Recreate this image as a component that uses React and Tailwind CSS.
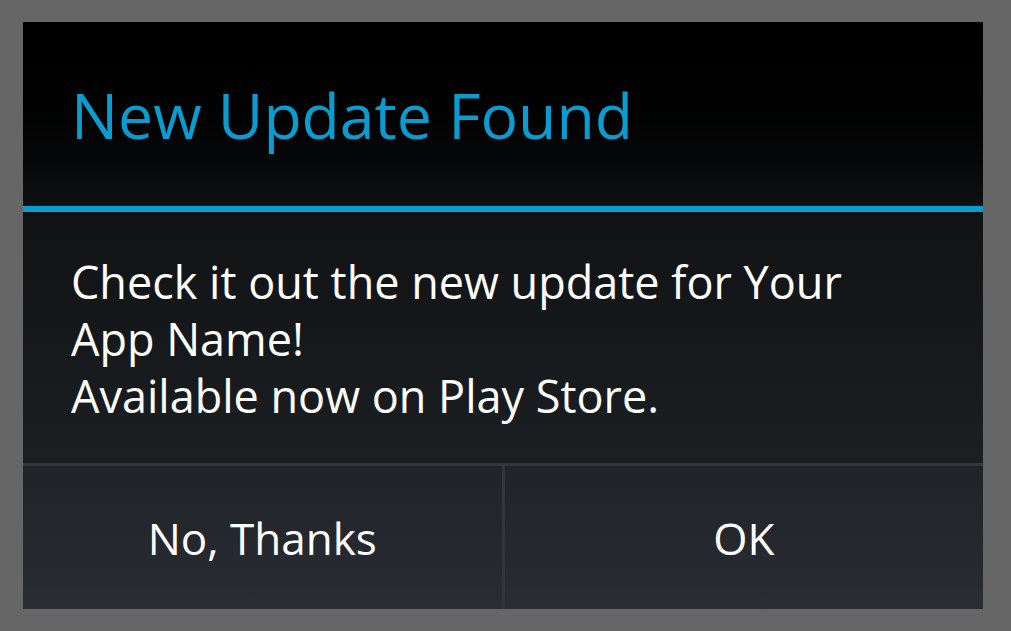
export default function App() {
  return (
    <div className="min-h-screen w-full bg-[#666666] px-[23px] pt-[22px] pb-[22px]" style={{ fontFamily: "'Open Sans', sans-serif" }}>
      <div className="flex h-[587px] w-[960px] flex-col">
        {/* Title */}
        <div className="flex h-[184px] items-center bg-gradient-to-b from-[#000000] to-[#0e1012] pl-[48px] pr-[50px]">
          <h1 className="text-[62.5px] leading-none font-normal text-[#0a9bcf] pt-[2px]">New Update Found</h1>
        </div>
        <div className="h-[6px] bg-[#0a9bcf]" />

        {/* Message */}
        <div className="flex h-[251px] flex-col bg-gradient-to-b from-[#101214] to-[#1c1f22] pl-[48px] pr-[40px] pt-[41px]">
          <p className="text-[45px] leading-[57px] text-white">
            Check it out the new update for Your
            <br />
            App Name!
            <br />
            Available now on Play Store.
          </p>
        </div>

        {/* Buttons */}
        <div className="h-[3px] bg-[#32363b]" />
        <div className="flex flex-1 bg-gradient-to-b from-[#202327] to-[#292d34]">
          <button className="flex flex-1 items-center justify-center text-[44px] text-white">No, Thanks</button>
          <div className="w-[3px] bg-[#32363b]" />
          <button className="flex flex-1 items-center justify-center text-[44px] text-white">OK</button>
        </div>
      </div>
    </div>
  );
}
